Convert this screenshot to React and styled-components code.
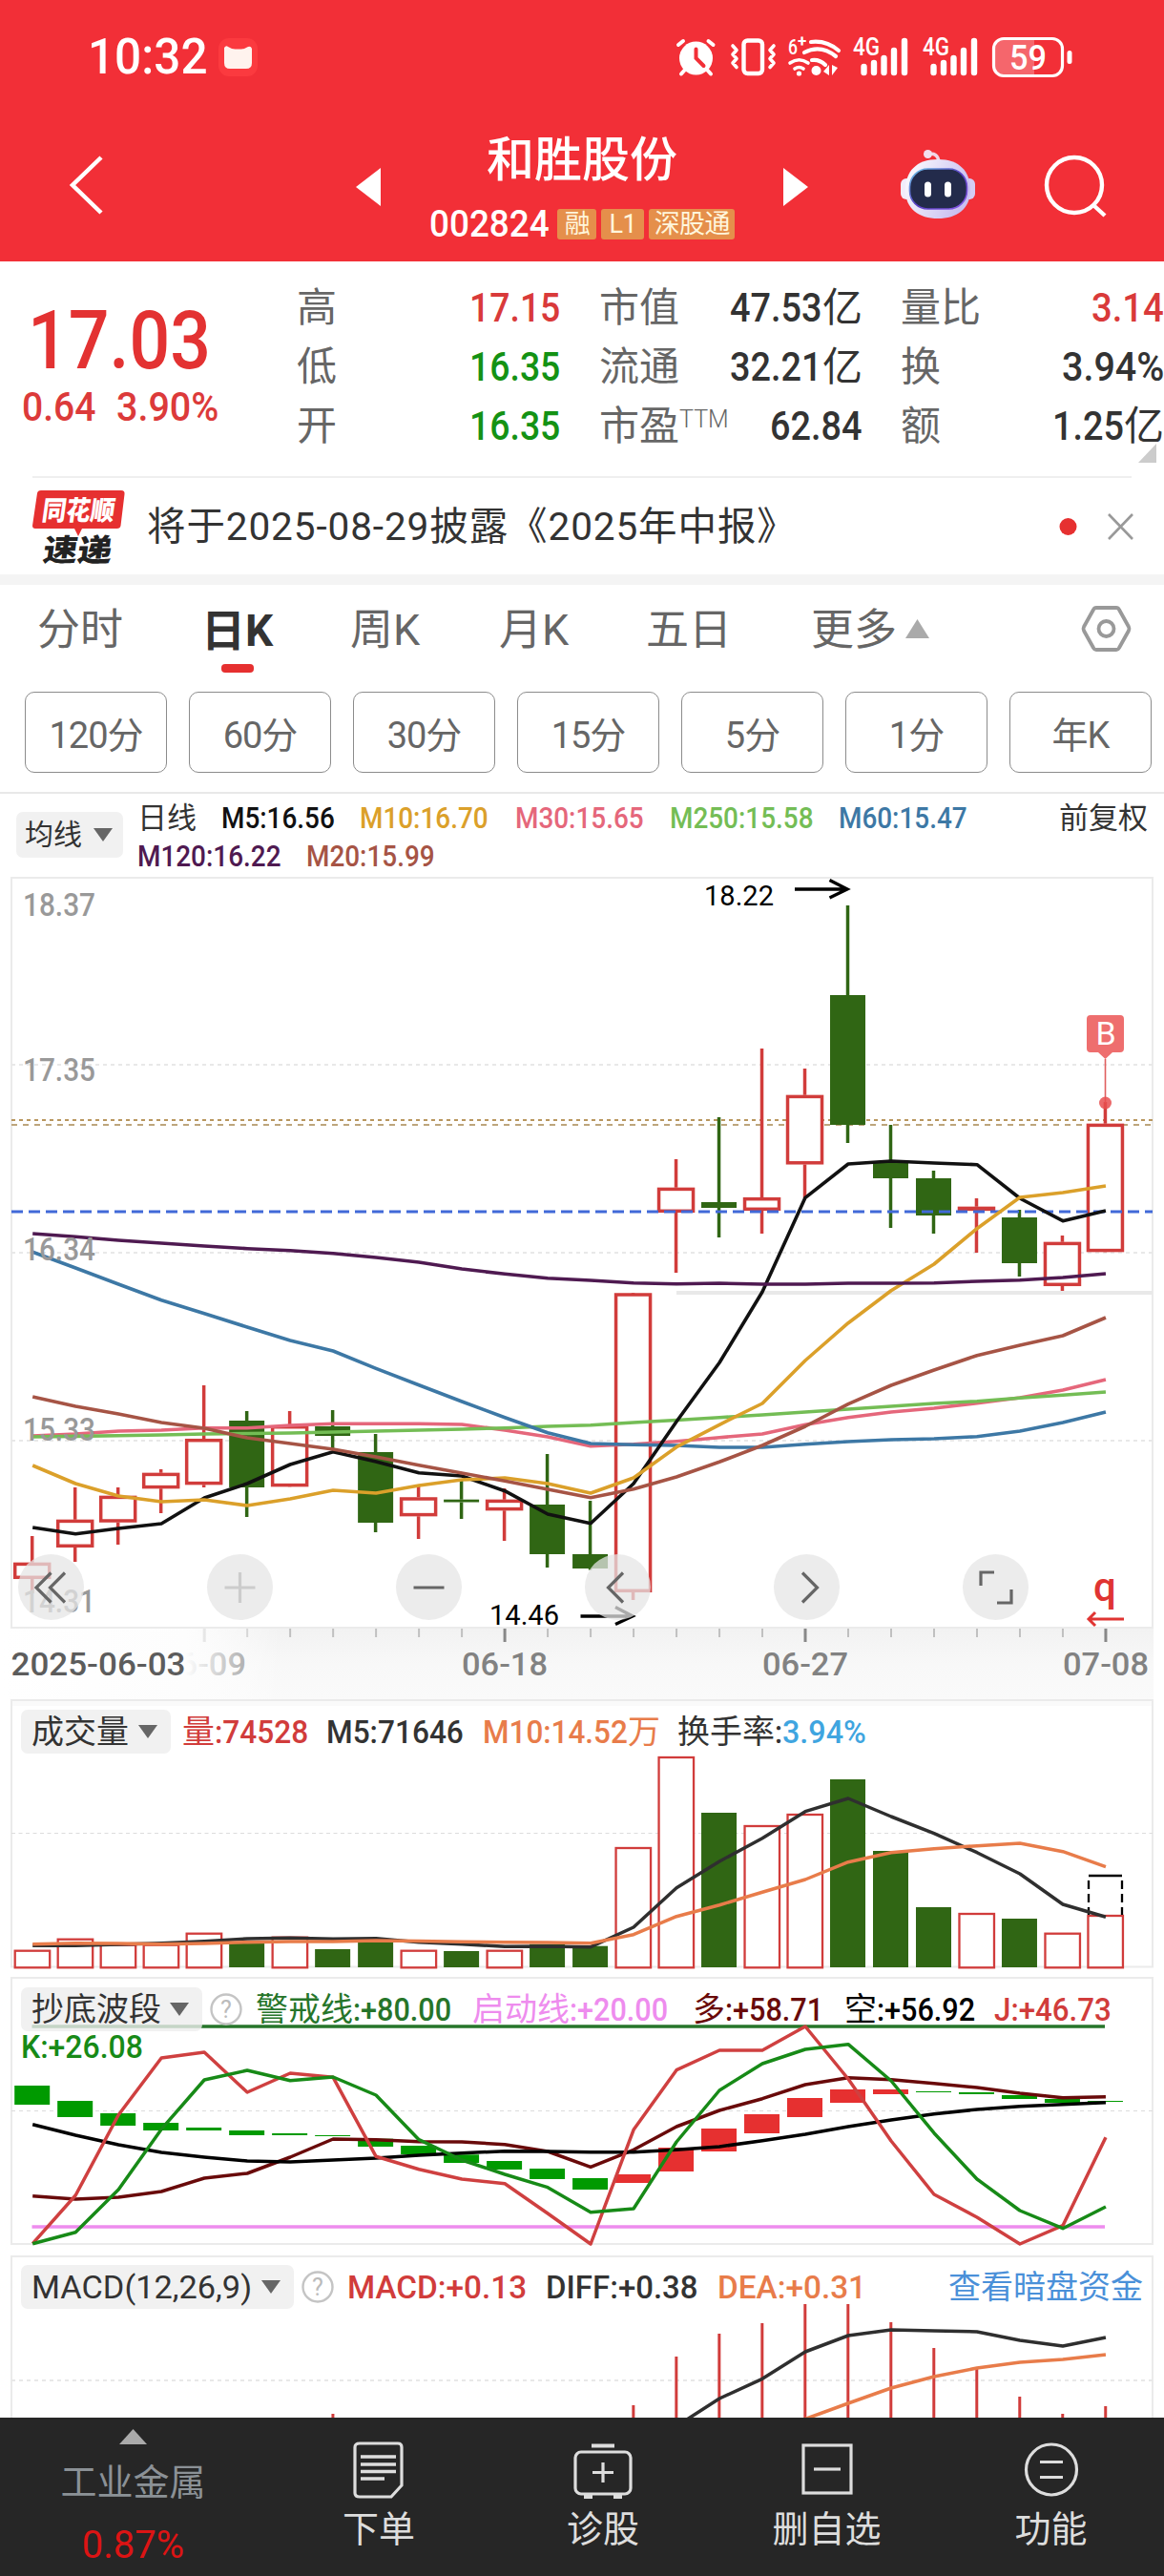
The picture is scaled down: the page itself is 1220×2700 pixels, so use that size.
import React from 'react'
import styled, { createGlobalStyle } from 'styled-components'

const GlobalStyle = createGlobalStyle`
  * { box-sizing: border-box; }
  body {
    margin: 0;
    background: #fff;
    font-family: Roboto, "Noto Sans CJK SC", sans-serif;
    color: #333;
  }
  svg { display: block; flex-shrink: 0; overflow: visible; }
  svg text { font-family: Roboto, "Noto Sans CJK SC", sans-serif; }
`;

const RED = '#d13c3b';
const GREEN = '#306614';

/* ---------- condensed figures ---------- */

// advance widths in em, anything else is as wide as a digit
const ADVANCE = {
  '.': 0.263, ':': 0.242, ',': 0.196, '+': 0.567, '%': 0.732, '(': 0.342, ')': 0.348,
  M: 0.873, K: 0.627, J: 0.552, A: 0.652, C: 0.651, D: 0.656, I: 0.272, F: 0.553, E: 0.568,
};
const emWidth = s => [...s].reduce((sum, c) => sum + (ADVANCE[c] || 0.562), 0);

const Squeezed = styled.span`
  display: inline-block;
  font-weight: ${p => p.$weight};
  letter-spacing: 0;
  color: inherit;
  transform: scaleX(${p => p.$k});
  transform-origin: left;
  margin-right: ${p => (p.$k - 1) * p.$em}em;
`;

const Num = ({ k = 0.9, weight = 500, children }) => (
  <Squeezed $k={k} $weight={weight} $em={emWidth(children)}>{children}</Squeezed>
)

const Page = styled.div`
  width: 1220px;
  height: 2700px;
  overflow: hidden;
  display: flex;
  flex-direction: column;
  white-space: nowrap;
`;

/* ---------- header ---------- */

const Header = styled.header`
  height: 274px;
  background: #f22f37;
  color: #fff;
`;

const StatusBar = styled.div`
  height: 120px;
  padding: 0 96px 0 92px;
  display: flex;
  align-items: center;
  justify-content: space-between;
`;

const Clock = styled.div`
  display: flex;
  align-items: center;
  gap: 11px;
  font-size: 51px;
  line-height: 60px;
`;

const TitleBar = styled.div`
  height: 154px;
  display: grid;
  grid-template-columns: 373px 474px 373px;
`;

const HeaderLeft = styled.div`
  padding: 42px 0 0 72px;
`;

const HeaderRight = styled.div`
  display: flex;
  gap: 71px;
  padding: 35px 0 0 96px;
`;

const StockSwitch = styled.div`
  display: flex;
  justify-content: space-between;
  > svg { margin-top: 56px; }
`;

const StockName = styled.div`
  display: flex;
  flex-direction: column;
  align-items: center;
  h1 {
    margin: 18px 0 0;
    font-size: 50px;
    line-height: 60px;
    font-weight: 500;
  }
`;

const CodeRow = styled.div`
  display: flex;
  align-items: center;
  gap: 5px;
  margin-top: 20px;
  height: 34px;
  font-size: 38px;
  line-height: 34px;
  > span:first-child { padding-right: 4px; }
`;

const Tag = styled.div`
  height: 32px;
  width: ${p => p.$w}px;
  display: flex;
  justify-content: center;
  background: #e58f4b;
  color: #fff6dc;
  border-radius: 3px;
  font-size: 27px;
  line-height: 32px;
  letter-spacing: -0.5px;
`;

/* ---------- quote ---------- */

const Quote = styled.section`
  position: relative;
  height: 225px;
  display: flex;
`;

const PriceBlock = styled.div`
  width: 311px;
  padding: 43px 0 0 23px;
  color: #e33232;
  strong {
    display: block;
    padding-left: 6px;
    font-size: 85px;
    font-weight: 500;
    line-height: 80px;
  }
  div {
    display: flex;
    gap: 21px;
    margin-top: 8px;
    font-size: 42px;
    line-height: 44px;
    color: #dc3a3a;
  }
`;

const StatGrid = styled.div`
  height: 186px;
  margin-top: 18px;
  display: grid;
  grid-template-columns: 277px 276px 276px;
  column-gap: 40px;
  grid-template-rows: repeat(3, 62px);
`;

const Stat = styled.div`
  display: flex;
  justify-content: space-between;
  align-items: center;
  font-size: 42px;
  line-height: 62px;
  label { color: #666; }
  sup {
    font-size: 25px;
    line-height: 20px;
    vertical-align: 13px;
    font-weight: 300;
  }
  b {
    font-weight: 400;
    color: ${p => p.$color || '#333'};
  }
`;

const Corner = styled.svg`
  position: absolute;
  right: 8px;
  bottom: 14px;
`;

const News = styled.section`
  height: 103px;
  margin: 0 34px;
  border-top: 2px solid #efefef;
  display: flex;
  align-items: center;
  p {
    flex: 1;
    margin: 0 0 0 23px;
    font-size: 40.5px;
    line-height: 60px;
    letter-spacing: 0.9px;
  }
  > svg:last-child { margin-right: -2px; }
`;

const Divider = styled.div`
  height: 11px;
  background: #f4f4f4;
`;

/* ---------- period tabs ---------- */

const Tabs = styled.nav`
  height: 112px;
  padding: 16px 34px 0 39px;
  display: flex;
`;

const Tab = styled.div`
  width: ${p => p.$w}px;
  display: flex;
  gap: 9px;
  font-size: 45px;
  line-height: 64px;
  color: ${p => p.$active ? '#333' : '#666'};
  font-weight: ${p => p.$active ? 700 : 400};
  div {
    display: flex;
    flex-direction: column;
    align-items: center;
    font-size: 46px;
  }
  i {
    width: 34px;
    height: 9px;
    margin-top: 3px;
    border-radius: 4px;
    background: #e63030;
  }
  svg { margin-top: 20px; }
`;

const Minutes = styled.div`
  height: 105px;
  padding: 0 13px 0 26px;
  display: flex;
  justify-content: space-between;
`;

const MinuteButton = styled.button`
  width: 149px;
  height: 85px;
  padding: 0;
  border: 1px solid #8c8c8c;
  border-radius: 10px;
  background: #fff;
  color: #666;
  font: inherit;
  font-size: 38px;
  letter-spacing: -1px;
`;

/* ---------- charts ---------- */

const MaHeader = styled.section`
  height: 91px;
  padding: 6px 17px 0;
  border-top: 2px solid #e8e8e8;
  display: flex;
  font-size: 31px;
  line-height: 40px;
`;

const Chip = styled.div`
  width: ${p => p.$w}px;
  height: 46px;
  margin-right: ${p => p.$gap || 12}px;
  padding: 0 14px 0 11px;
  flex-shrink: 0;
  display: flex;
  align-items: center;
  justify-content: space-between;
  border-radius: 7px;
  background: rgba(238, 238, 238, 0.8);
  color: #333;
  font-size: 34px;
`;

const MaChip = styled(Chip)`
  height: 48px;
  margin-top: 13px;
  padding: 0 11px 0 9px;
  font-size: 30px;
`;

const MaRows = styled.div`
  flex: 1;
`;

const Row = styled.div`
  display: flex;
`;

const Legend = styled.span`
  width: ${p => p.$w}px;
  flex-shrink: 0;
  color: ${p => p.$color || '#333'};
  em { font-style: normal; color: #3fa5e0; }
`;

const Panel = styled.section`
  position: relative;
  height: ${p => p.$h}px;
  flex-shrink: 0;
  overflow: ${p => p.$clip ? 'hidden' : 'visible'};
`;

const PanelHeader = styled.div`
  position: absolute;
  top: 10px;
  left: 22px;
  right: 12px;
  font-size: 34px;
  line-height: 46px;
`;

const KRow = styled.div`
  line-height: 32px;
`;

const Controls = styled.div`
  position: absolute;
  left: 19px;
  bottom: 9px;
  display: flex;
  gap: 129px;
`;

const RoundButton = styled.div`
  width: 69px;
  height: 69px;
  border-radius: 50%;
  background: rgba(230, 230, 230, 0.74);
`;

/* ---------- bottom nav ---------- */

const BottomNav = styled.nav`
  height: 166px;
  flex-shrink: 0;
  background: #262626;
  display: grid;
  grid-template-columns: 279px 236px 234px 235px 235px;
`;

const NavItem = styled.div`
  display: flex;
  flex-direction: column;
  align-items: center;
  padding-top: 22px;
  color: #ddd;
  font-size: 38px;
  line-height: 48px;
  svg { margin-bottom: 7px; }
`;

const Sector = styled(NavItem)`
  padding-top: 12px;
  color: #8b9196;
  svg { margin-bottom: 16px; }
  b {
    margin-top: 18px;
    font-size: 40px;
    font-weight: 400;
    color: #dc1414;
  }
`;

/* ---------- data, in chart units ---------- */

const STEP = 44.99;
const cx = i => 33.7 + STEP * i;

// [up, bodyTop, bodyBottom, high, low]
const candles = [
  [1, 1637.7, 1655, 1610, 1670], [1, 1592.7, 1622, 1559, 1637], [1, 1567.7, 1595.7, 1559, 1619],
  [1, 1543.7, 1560.3, 1540, 1586], [1, 1508, 1556.3, 1452, 1559], [0, 1489, 1559, 1479, 1590],
  [1, 1494, 1558.3, 1479, 1558], [0, 1495, 1505, 1478, 1520], [0, 1522, 1596, 1503, 1606],
  [1, 1569.3, 1589.3, 1558, 1613], [0, 1571.7, 1574.5, 1550, 1592], [1, 1571.7, 1583.3, 1560, 1615],
  [0, 1577, 1629, 1524, 1643], [0, 1629, 1644, 1573, 1645.5], [1, 1355.3, 1669, 1356, 1677],
  [1, 1244.7, 1271, 1215, 1334], [0, 1260, 1266, 1171, 1297], [1, 1255, 1269, 1099, 1293],
  [1, 1147.7, 1220.5, 1120, 1256], [0, 1043, 1179, 949, 1198], [0, 1218.7, 1235, 1179, 1287],
  [0, 1235, 1274, 1227, 1293], [1, 1264.7, 1269, 1256, 1313], [0, 1276, 1324, 1268, 1338],
  [1, 1301.7, 1348, 1295, 1353], [1, 1177.7, 1312.3, 1155, 1312],
];

const averages = [
  ['#e5677b', [1505, 1503, 1500, 1499, 1496.7, 1496.7, 1494, 1492.3, 1492.3, 1492.3, 1493, 1499, 1506, 1515.7, 1513.7, 1510.7, 1506.7, 1503, 1493.3, 1485.7, 1480, 1476, 1470.7, 1465, 1457, 1446]],
  ['#74bd55', [1506, 1505.4, 1504.7, 1504, 1503, 1502.5, 1502, 1501, 1500, 1499, 1498, 1496.7, 1495, 1493.7, 1491, 1488.5, 1485.7, 1483, 1480, 1477, 1474, 1471, 1468.7, 1465.3, 1462.3, 1459]],
  ['#3d78a5', [1312.3, 1329, 1346, 1362.7, 1376.7, 1391, 1405, 1416, 1434.3, 1451.7, 1469, 1485.7, 1501.7, 1513, 1514.3, 1515, 1517, 1517, 1513.7, 1511, 1509, 1508, 1505.7, 1500, 1491, 1480]],
  ['#111', [1601, 1607.7, 1602, 1597, 1570, 1555, 1535, 1521.7, 1532, 1543.7, 1547, 1562.7, 1587, 1596.7, 1555, 1490, 1428.3, 1354, 1255.3, 1220, 1217, 1219, 1220.7, 1256, 1279.7, 1269]],
  ['#dba02a', [1536, 1555, 1568, 1574, 1572, 1578, 1571, 1562, 1565, 1557, 1551, 1549, 1555, 1565, 1549, 1516.7, 1493.3, 1471, 1426, 1386.7, 1352.7, 1325, 1287.7, 1255, 1250, 1243]],
  ['#4f1a51', [1293, 1296.3, 1300, 1303, 1306, 1308.7, 1310.7, 1313.7, 1318, 1323, 1330, 1335.3, 1339.7, 1342, 1344.7, 1345.7, 1345, 1346, 1346, 1345, 1345, 1344.7, 1343, 1341.7, 1339, 1335]],
  ['#a65445', [1464, 1474, 1482, 1491, 1497, 1507, 1513, 1519, 1527, 1535.7, 1544, 1552.3, 1561, 1569.7, 1560.7, 1548, 1532.3, 1515, 1495, 1471.7, 1452, 1436, 1420.7, 1410, 1400, 1381]],
];

const volumes = [2043.7, 2031.7, 2037.7, 2037.7, 2025.7, 2035.7, 2029.7, 2043, 2035.7, 2043.7, 2045, 2043.7, 2037.7, 2039.7, 1936, 1841, 1900, 1913, 1901, 1865, 1940, 1999, 2005, 2011, 2025.7, 2007];
const volumeLines = [
  ['#2f2f2f', [2039.3, 2039.3, 2038, 2036.7, 2034.7, 2032, 2031.3, 2032.3, 2031.7, 2035.7, 2037.7, 2040.3, 2040, 2040.7, 2020, 1978.7, 1951, 1926.7, 1898.7, 1885, 1904, 1921.7, 1941.7, 1964, 1996, 2009.3]],
  ['#e87c4a', [2037.7, 2036.7, 2037, 2037.7, 2037, 2035.7, 2035, 2035, 2034, 2034.5, 2035.3, 2035.7, 2036, 2036.7, 2027.7, 2008.7, 1996.7, 1983.3, 1970, 1951.7, 1941.7, 1937.7, 1934.7, 1932, 1940.7, 1956.7]],
];

const waveBlocks = [
  [2186, 2206], [2202, 2219], [2215, 2228], [2225, 2233], [2230, 2233], [2233, 2238], [2236, 2238], [2238, 2239],
  [2241.7, 2250], [2249, 2258], [2258.3, 2267], [2265, 2274], [2273, 2284], [2283, 2295],
  [2279, 2288], [2251, 2276], [2231, 2255], [2216, 2236], [2199, 2219], [2190, 2204], [2190, 2195],
  [2192, 2193], [2193, 2195], [2196, 2200], [2200, 2204], [2202, 2203],
];
const waveLines = [
  ['#690a0a', [2301.7, 2305, 2303, 2297, 2283, 2278, 2261, 2242, 2242.7, 2244.7, 2245, 2247.7, 2255, 2271.3, 2253.3, 2229, 2212, 2199.7, 2185, 2177.7, 2179.7, 2183.7, 2188, 2194, 2198.7, 2197.7]],
  ['#000', [2226.7, 2238, 2248, 2256, 2261, 2265, 2266, 2264, 2262, 2259, 2256.7, 2254.7, 2255, 2255.7, 2255.7, 2253.3, 2250, 2243.7, 2237, 2229, 2222, 2215.7, 2211, 2207.7, 2205.7, 2203.7]],
  ['#cf4040', [2351.7, 2301, 2216.7, 2157, 2151, 2193, 2173, 2177.3, 2260.3, 2273.7, 2284, 2288.7, 2320, 2352, 2232.3, 2169.7, 2149, 2149, 2124, 2179, 2244, 2300, 2324, 2352, 2332.7, 2240.3]],
  ['#178a17', [2351.7, 2339.7, 2295, 2231.7, 2180, 2170, 2180.7, 2177, 2196, 2242.7, 2264, 2279, 2292.7, 2318.7, 2315, 2245, 2191, 2163, 2148, 2142.7, 2181, 2235.7, 2284, 2317, 2335.7, 2313]],
];

const macdBars = { 7: 2530, 14: 2521, 15: 2470, 16: 2446, 17: 2435, 18: 2415, 19: 2415, 20: 2434, 21: 2461, 22: 2483, 23: 2512, 24: 2530, 25: 2522 };
const macdLines = [
  ['#2f2f2f', 15, [2543, 2514, 2493.3, 2465, 2448, 2442, 2443, 2444, 2453, 2459, 2450]],
  ['#e87c4a', 18, [2535.5, 2519, 2503, 2491, 2482, 2476, 2473, 2468]],
];

const Line = ({ color, values, from = 0, w = 3.5 }) => (
  <polyline
    fill="none"
    stroke={color}
    strokeWidth={w}
    strokeLinejoin="round"
    points={values.map((y, i) => `${cx(i + from) + 0.5},${y}`).join(' ')}
  />
)

const Frame = ({ top, bottom }) => (
  <rect x="12" y={top} width="1196" height={bottom - top} fill="none" stroke="#ebebeb" strokeWidth="2" />
)

const Grid = ({ y, dash = '4 4', color = '#e8e8e8', w = 2 }) => (
  <path d={`M12 ${y}H1208`} stroke={color} strokeWidth={w} strokeDasharray={dash} />
)

const Caret = ({ up, w = 20, h = 14, color = '#666' }) => (
  <svg width={w} height={h} viewBox="0 0 20 14" preserveAspectRatio="none">
    <path d={up ? 'M10 0L20 14H0Z' : 'M0 0H20L10 14Z'} fill={color} />
  </svg>
)

const HelpIcon = styled.svg`
  margin-right: 14px;
`;

const Help = () => (
  <HelpIcon width="34" height="46" viewBox="0 0 34 46">
    <circle cx="17" cy="23" r="15.500" fill="none" stroke="#c4c4c4" strokeWidth="2.400" />
    <text x="17" y="32" fontSize="25" textAnchor="middle" fill="#bbb">?</text>
  </HelpIcon>
)

const Signal = ({ x }) => (
  <g transform={`translate(${x} 37)`}>
    <text x="0" y="20" fontSize="25" fontWeight="500" fill="#fff" textLength="28" lengthAdjust="spacingAndGlyphs">4G</text>
    <path d="M11.500 32v6M22 28v10M32.500 23v15M43 15v23M54 5v33" stroke="#fff" strokeWidth="6.400" strokeLinecap="round" />
  </g>
)

function StatusIcons() {
  return (
    <svg width="416" height="44" viewBox="708 37 416 44">
      <g fill="none" stroke="#fff" strokeLinecap="round">
        <circle cx="729.500" cy="60" r="17.500" fill="#fff" stroke="none" />
        <path d="M711 46l5-4M747.500 46l-5-4M718 72l-4 4.500M741 72l4 4.500" strokeWidth="4" />
        <path d="M729.500 50.500V60l8 8" stroke="#f22f37" strokeWidth="4" />
        <rect x="779.500" y="41.500" width="19.500" height="34.500" rx="4" strokeWidth="4.400" />
        <path d="M768 47l4 4.500-4 4.500 4 4.500-4 4.500 4 4.500M811 47l-4 4.500 4 4.500-4 4.500 4 4.500-4 4.500" strokeWidth="3.600" strokeLinejoin="round" />
        <path d="M828 65q9.500-6.500 19 0M833 71q4.500-3 9 0" strokeWidth="3.600" />
        <path d="M850 43q16-2 29 9M843 54q17-9 33 4M851 62q8-1 14 5" strokeWidth="4.200" />
      </g>
      <text x="826" y="56" fontSize="22" fontWeight="500" fill="#fff" textLength="10" lengthAdjust="spacingAndGlyphs">6</text>
      <text x="836" y="48" fontSize="17" fontWeight="700" fill="#fff">+</text>
      <circle cx="837.500" cy="76" r="2.600" fill="#fff" />
      <circle cx="855.500" cy="73" r="5" fill="#fff" />
      <path d="M863 74l6-7v11M872 67l6 3-6 8z" fill="#fff" />
      <Signal x={894} />
      <Signal x={967} />
      <path d="M1052 41h32v36h-32a9 9 0 0 1-9-9V50a9 9 0 0 1 9-9z" fill="#f5666c" />
      <rect x="1041.500" y="39.500" width="72" height="39" rx="10.500" fill="none" stroke="#fff" strokeWidth="3.200" />
      <text x="1077.500" y="72" fontSize="36" fontWeight="500" fill="#fff" textAnchor="middle" textLength="39" lengthAdjust="spacingAndGlyphs">59</text>
      <rect x="1118.500" y="52" width="5" height="14" rx="2.500" fill="#fff" />
    </svg>
  )
}

function Robot() {
  return (
    <svg width="80" height="76" viewBox="943 155 80 76">
      <defs>
        <linearGradient id="shell" x1="0" y1="0" x2="1" y2="0.4">
          <stop offset="0" stopColor="#fff" />
          <stop offset="1" stopColor="#c9bff0" />
        </linearGradient>
        <linearGradient id="visor" x1="0" y1="0" x2="1" y2="1">
          <stop offset="0" stopColor="#6cc8e8" />
          <stop offset="0.5" stopColor="#5a3fc4" />
          <stop offset="1" stopColor="#8a5ae8" />
        </linearGradient>
      </defs>
      <path d="M972 162q11-3 12 8" fill="none" stroke="#f1d5e6" strokeWidth="3.500" />
      <circle cx="972.500" cy="161.500" r="4.500" fill="#f3dfee" />
      <rect x="944" y="187" width="12" height="22" rx="6" fill="#f2ecfb" />
      <rect x="1010" y="187" width="12" height="22" rx="6" fill="#d5cdf4" />
      <path d="M983 167c23 0 34 13 34 32 0 20-14 30-34 30s-34-10-34-30c0-19 11-32 34-32z" fill="url(#shell)" />
      <rect x="953.500" y="177" width="60" height="42" rx="19" fill="#232b4b" stroke="url(#visor)" strokeWidth="1.600" />
      <rect x="969" y="190.500" width="7" height="16" rx="3.500" fill="#fff" />
      <rect x="990" y="190.500" width="7" height="16" rx="3.500" fill="#fff" />
    </svg>
  )
}

function NewsLogo() {
  return (
    <svg width="97" height="80" viewBox="35 509 97 80">
      <path d="M44 511h84q4 0 3.500 4l-4 33q-.500 3-4 3H87l-4 8-4-8H38q-3 0-3-3l5-34q.500-3 4-3z" fill="#e63030" />
      <text transform="translate(44 542) skewX(-8)" fontSize="28" fontWeight="900" fill="#fff" textLength="76" lengthAdjust="spacingAndGlyphs">同花顺</text>
      <text transform="translate(45 585) skewX(-8)" fontSize="32" fontWeight="900" fill="#222" textLength="72" lengthAdjust="spacingAndGlyphs">速递</text>
    </svg>
  )
}

function CandleChart() {
  return (
    <svg width="1220" height="786" viewBox="0 921 1220 786">
      <Frame top={920} bottom={1706} />
      <Grid y={1116} />
      <Grid y={1313} />
      <Grid y={1510} />
      <path d="M709 1355H1208" stroke="#e9e9e9" strokeWidth="4" />
      <Grid y={1174} color="#b9975f" />
      <Grid y={1179} dash="6 6" color="#bda57c" />
      {candles.map(([up, top, bottom, high, low], i) => (
        <g key={i} stroke={up ? RED : GREEN} strokeWidth="3.500">
          <path d={`M${cx(i)} ${high}V${top}M${cx(i)} ${bottom}V${low}`} />
          {up
            ? <rect x={cx(i) - 18} y={top + 1.7} width="36" height={Math.max(bottom - top - 3.4, 1)} fill="#fff" />
            : <rect x={cx(i) - 18.5} y={top} width="37" height={bottom - top} fill={GREEN} stroke="none" />}
        </g>
      ))}
      <path d="M12 1270H1208" stroke="#4169d8" strokeWidth="3.200" strokeDasharray="12 6" />
      {averages.map(([color, values]) => <Line key={color} color={color} values={values} w={3.6} />)}
      <g fill="#999" fontSize="33.500" fontWeight="500">
        {[['18.37', 960], ['17.35', 1132.5], ['16.34', 1321], ['15.33', 1510], ['14.31', 1690]].map(([label, y]) => (
          <text key={label} x="24" y={y} textLength="76" lengthAdjust="spacingAndGlyphs">{label}</text>
        ))}
      </g>
      <g fontSize="30" fill="#000">
        <text x="738" y="949" textLength="73" lengthAdjust="spacingAndGlyphs">18.22</text>
        <text x="513" y="1702.500" textLength="73" lengthAdjust="spacingAndGlyphs">14.46</text>
      </g>
      <g fill="none" stroke="#000" strokeWidth="3.400">
        <path d="M833 932H888M869.500 922.500L888 932L869.500 941" />
        <path d="M608.500 1694H663M645 1684.500L663 1694L645 1702.500" />
      </g>
      <path d="M1143 1064h31q4 0 4 4v31q0 4-4 4h-8l-7.500 7-7.500-7h-8q-4 0-4-4v-31q0-4 4-4z" fill="#ee6e6e" />
      <text x="1159" y="1095" fontSize="34" textAnchor="middle" fill="#fff">B</text>
      <path d="M1158.500 1110V1156" stroke="#e06060" strokeWidth="1.600" />
      <circle cx="1158.500" cy="1156" r="6.500" fill="#e74f50" fillOpacity=".85" />
      <text x="1158" y="1678" fontSize="42" fontWeight="500" textAnchor="middle" fill="#e03432">q</text>
      <path d="M1178 1697H1141M1148 1690L1141 1697L1148 1704" fill="none" stroke="#e03432" strokeWidth="3" />
    </svg>
  )
}

const controlIcons = [
  'M34.500 19.500L19 35l15.500 15.500M49 19.500L33.500 35L49 50.500',
  'M18.500 35h32M34.500 19v32',
  'M18.500 35h32',
  'M40 19.500L24.500 35l15.500 15.500',
  'M30 19.500L45.500 35L30 50.500',
  'M19 33V19h14M36 51h15V37',
];

function DateAxis() {
  return (
    <svg width="1220" height="75" viewBox="0 1707 1220 75">
      <defs>
        <linearGradient id="shade" x1="0" y1="0" x2="0" y2="1">
          <stop offset="0" stopColor="#f2f2f2" />
          <stop offset="0.5" stopColor="#f8f8f8" />
          <stop offset="1" stopColor="#fafafa" />
        </linearGradient>
        <linearGradient id="fade" x1="0" y1="0" x2="1" y2="0">
          <stop offset="0" stopColor="#fff" />
          <stop offset="0.66" stopColor="#fdfdfd" />
          <stop offset="1" stopColor="#fff" stopOpacity="0" />
        </linearGradient>
      </defs>
      <rect x="12" y="1707" width="1197" height="75" fill="url(#shade)" />
      {candles.slice(4).map((_, i) => {
        const major = i % 7 === 0
        return <path key={i} d={`M${cx(i + 4) + 0.5} 1707v${major ? 14 : 9}`} stroke={major ? '#888' : '#c0c0c0'} strokeWidth={major ? 3 : 2} />
      })}
      <g fontSize="34" fontWeight="500" fill="#828282">
        {[['06-09', 168], ['06-18', 484], ['06-27', 799], ['07-08', 1114]].map(([d, x]) => (
          <text key={d} x={x} y="1755.500" textLength="90" lengthAdjust="spacingAndGlyphs">{d}</text>
        ))}
      </g>
      <rect x="0" y="1707" width="295" height="75" fill="url(#fade)" />
      <text x="11.500" y="1755.500" fontSize="34" fontWeight="500" fill="#5c5c5c" textLength="183" lengthAdjust="spacingAndGlyphs">2025-06-03</text>
    </svg>
  )
}

function VolumeChart() {
  return (
    <svg width="1220" height="291" viewBox="0 1782 1220 291">
      <rect x="12" y="1782" width="1196" height="6" fill="#fafafa" />
      <Frame top={1782} bottom={2061.5} />
      <Grid y={1921.5} dash="4 3.5" color="#dcdcdc" w={1} />
      {volumes.map((top, i) => candles[i][0]
        ? <rect key={i} x={cx(i) - 18} y={top + 1} width="36.500" height={2061.3 - top} fill="#fff" stroke={RED} strokeWidth="2.300" />
        : <rect key={i} x={cx(i) - 18.5} y={top} width="37" height={2062 - top} fill={GREEN} />)}
      <path d="M1141 1966H1176" stroke="#000" strokeWidth="2.600" />
      <path d="M1141 1971V2007M1176 1971V2007" stroke="#000" strokeWidth="2.300" strokeDasharray="9 5" />
      {volumeLines.map(([color, values]) => <Line key={color} color={color} values={values} />)}
    </svg>
  )
}

function WaveChart() {
  return (
    <svg width="1220" height="291" viewBox="0 2073 1220 291">
      <Frame top={2073} bottom={2352} />
      <Grid y={2212.5} dash="4 4" color="#dcdcdc" w={1} />
      <path d="M33.500 2124H1158" stroke="#26752a" strokeWidth="3.600" />
      <path d="M33.500 2334H1158" stroke="#ee8cee" strokeWidth="3.600" />
      {waveBlocks.map(([top, bottom], i) => (
        <rect key={i} x={cx(i) - 18.5} y={top} width="37" height={bottom - top} fill={i > 13 && i < 21 ? '#e63030' : '#009a00'} />
      ))}
      {waveLines.map(([color, values]) => <Line key={color} color={color} values={values} />)}
    </svg>
  )
}

function MacdChart() {
  return (
    <svg width="1220" height="170" viewBox="0 2364 1220 170">
      <Frame top={2365} bottom={2644} />
      <Grid y={2495} />
      {Object.entries(macdBars).map(([i, top]) => (
        <path key={i} d={`M${cx(Number(i)) + 0.3} ${top}V2540`} stroke={RED} strokeWidth="3" />
      ))}
      {macdLines.map(([color, from, values]) => <Line key={color} color={color} from={from} values={values} />)}
    </svg>
  )
}

export default function App() {
  return (
    <Page>
      <GlobalStyle />

      <Header>
        <StatusBar>
          <Clock>
            <Num k={0.97}>10:32</Num>
            <svg width="41" height="40" viewBox="0 0 41 40">
              <rect width="41" height="40" rx="11" fill="#fb3a3f" />
              <path d="M6 10q2-3 4-1l4 2q7 1 13 0l4-2q3-1 4 2v15q0 6-6 6H12q-6 0-6-6z" fill="#fff3ee" />
            </svg>
          </Clock>
          <StatusIcons />
        </StatusBar>
        <TitleBar>
          <HeaderLeft>
            <svg width="38" height="64" viewBox="0 0 38 64">
              <path d="M34 3L4 32L34 61" fill="none" stroke="#fff" strokeWidth="4.500" />
            </svg>
          </HeaderLeft>
          <StockSwitch>
            <svg width="26" height="40" viewBox="0 0 26 40"><path d="M26 0V40L0 20Z" fill="#fff" /></svg>
            <StockName>
              <h1>和胜股份</h1>
              <CodeRow>
                <span><Num k={0.97}>002824</Num></span>
                <Tag $w={41}>融</Tag>
                <Tag $w={45}>L1</Tag>
                <Tag $w={90}>深股通</Tag>
              </CodeRow>
            </StockName>
            <svg width="26" height="40" viewBox="0 0 26 40"><path d="M0 0V40L26 20Z" fill="#fff" /></svg>
          </StockSwitch>
          <HeaderRight>
            <Robot />
            <svg width="68" height="74" viewBox="0 -6 68 74">
              <circle cx="32" cy="33" r="29" fill="none" stroke="#fff" strokeWidth="4.400" />
              <path d="M52 54l12 11" stroke="#fff" strokeWidth="4.400" />
            </svg>
          </HeaderRight>
        </TitleBar>
      </Header>

      <Quote>
        <PriceBlock>
          <strong><Num k={0.885}>17.03</Num></strong>
          <div><Num k={0.93}>0.64</Num><Num k={0.94}>3.90%</Num></div>
        </PriceBlock>
        <StatGrid>
          <Stat $color="#d93a3a"><label>高</label><b><Num k={0.89}>17.15</Num></b></Stat>
          <Stat><label>市值</label><b><Num>47.53</Num>亿</b></Stat>
          <Stat $color="#d93a3a"><label>量比</label><b><Num k={0.91}>3.14</Num></b></Stat>
          <Stat $color="#149214"><label>低</label><b><Num k={0.89}>16.35</Num></b></Stat>
          <Stat><label>流通</label><b><Num>32.21</Num>亿</b></Stat>
          <Stat><label>换</label><b><Num k={0.94}>3.94%</Num></b></Stat>
          <Stat $color="#149214"><label>开</label><b><Num k={0.89}>16.35</Num></b></Stat>
          <Stat><label>市盈<sup>TTM</sup></label><b><Num>62.84</Num></b></Stat>
          <Stat><label>额</label><b><Num>1.25</Num>亿</b></Stat>
        </StatGrid>
        <Corner width="19" height="20" viewBox="0 0 19 20"><path d="M19 0V20H0Z" fill="#ccc" /></Corner>
      </Quote>

      <News>
        <NewsLogo />
        <p>将于2025-08-29披露《2025年中报》</p>
        <svg width="78" height="30" viewBox="0 0 78 30">
          <circle cx="9.500" cy="15" r="9" fill="#e63030" />
          <path d="M52 2L77 28M77 2L52 28" stroke="#999" strokeWidth="2.600" />
        </svg>
      </News>

      <Divider />

      <Tabs>
        <Tab $w={172}>分时</Tab>
        <Tab $w={156} $active><div>日K<i /></div></Tab>
        <Tab $w={156}>周K</Tab>
        <Tab $w={154}>月K</Tab>
        <Tab $w={173}>五日</Tab>
        <Tab $w={283}>更多<Caret up w={25} h={20} color="#aaa" /></Tab>
        <svg width="53" height="62" viewBox="0 -5 53 62">
          <path d="M16 3H37Q39 3 40 5L50 23Q51 25 50 27L40 45Q39 47 37 47H16Q14 47 13 45L3 27Q2 25 3 23L13 5Q14 3 16 3Z" fill="none" stroke="#999" strokeWidth="3.800" />
          <circle cx="26.500" cy="25" r="8" fill="none" stroke="#999" strokeWidth="3.800" />
        </svg>
      </Tabs>

      <Minutes>
        {['120分', '60分', '30分', '15分', '5分', '1分', '年K'].map(m => <MinuteButton key={m}>{m}</MinuteButton>)}
      </Minutes>

      <MaHeader>
        <MaChip $w={112} $gap={15}>均线<Caret /></MaChip>
        <MaRows>
          <Row>
            <Legend $w={88}>日线</Legend>
            <Legend $w={145} $color="#111"><Num>M5:16.56</Num></Legend>
            <Legend $w={163} $color="#dba02a"><Num>M10:16.70</Num></Legend>
            <Legend $w={162} $color="#e5677b"><Num>M30:15.65</Num></Legend>
            <Legend $w={177} $color="#74bd55"><Num>M250:15.58</Num></Legend>
            <Legend $w={231} $color="#3d78a5"><Num>M60:15.47</Num></Legend>
            <Legend>前复权</Legend>
          </Row>
          <Row>
            <Legend $w={177} $color="#4f1a51"><Num>M120:16.22</Num></Legend>
            <Legend $w={163} $color="#a65445"><Num>M20:15.99</Num></Legend>
          </Row>
        </MaRows>
      </MaHeader>

      <Panel $h={786}>
        <CandleChart />
        <Controls>
          {controlIcons.map((d, i) => (
            <RoundButton key={d}>
              <svg width="69" height="69" viewBox="0 0 69 69">
                <path d={d} fill="none" stroke={i === 1 ? '#ccc' : '#666'} strokeWidth="3.200" />
              </svg>
            </RoundButton>
          ))}
        </Controls>
      </Panel>

      <Panel $h={75}>
        <DateAxis />
      </Panel>

      <Panel $h={291}>
        <VolumeChart />
        <PanelHeader>
          <Row>
            <Chip $w={157}>成交量<Caret /></Chip>
            <Legend $w={151} $color={RED}>量<Num k={0.93}>:74528</Num></Legend>
            <Legend $w={164}><Num k={0.93}>M5:71646</Num></Legend>
            <Legend $w={204} $color="#e87c4a"><Num k={0.925}>M10:14.52</Num>万</Legend>
            <Legend>换手率<Num>:</Num><em><Num k={0.95}>3.94%</Num></em></Legend>
          </Row>
        </PanelHeader>
      </Panel>

      <Panel $h={291}>
        <WaveChart />
        <PanelHeader>
          <Row>
            <Chip $w={190} $gap={8}>抄底波段<Caret /></Chip>
            <Help />
            <Legend $w={227} $color="#26752a">警戒线<Num>:+80.00</Num></Legend>
            <Legend $w={231} $color="#ee8cee">启动线<Num>:+20.00</Num></Legend>
            <Legend $w={159} $color="#690a0a">多<Num k={0.9}>:+58.71</Num></Legend>
            <Legend $w={157} $color="#000">空<Num k={0.9}>:+56.92</Num></Legend>
            <Legend $color={RED}><Num k={0.92}>J:+46.73</Num></Legend>
          </Row>
          <KRow>
            <Legend $color="#178a17"><Num k={0.94}>K:+26.08</Num></Legend>
          </KRow>
        </PanelHeader>
      </Panel>

      <Panel $h={170} $clip>
        <MacdChart />
        <PanelHeader>
          <Row>
            <Chip $w={286} $gap={8}><Num k={1.01} weight={400}>MACD(12,26,9)</Num><Caret /></Chip>
            <Help />
            <Legend $w={208} $color={RED}><Num k={0.98}>MACD:+0.13</Num></Legend>
            <Legend $w={180}><Num k={0.97}>DIFF:+0.38</Num></Legend>
            <Legend $w={242} $color="#e87c4a"><Num k={0.98}>DEA:+0.31</Num></Legend>
            <Legend $color="#4a90d9">查看暗盘资金</Legend>
          </Row>
        </PanelHeader>
      </Panel>

      <BottomNav>
        <Sector>
          <Caret up w={29} h={16} color="#aaa" />
          工业金属
          <b><Num k={1} weight={400}>0.87%</Num></b>
        </Sector>
        <NavItem>
          <svg width="56" height="64" viewBox="0 0 56 64" fill="none" stroke="#ddd" strokeWidth="3.200">
            <path d="M8 5H48Q52 5 52 9V49L41 61H8Q3 61 3 57V9Q3 5 8 5Z" />
            <path d="M9 19H46M9 27H46M9 34.500H46M9 42H34" strokeWidth="3.600" />
          </svg>
          下单
        </NavItem>
        <NavItem>
          <svg width="64" height="64" viewBox="0 0 64 64" fill="none" stroke="#ddd" strokeWidth="3.200">
            <path d="M20 7.500H44M12 61H21M43 61H52" strokeWidth="4" />
            <rect x="3" y="14" width="58" height="44" rx="6" />
            <path d="M21 35.500H43M32 25V46" />
          </svg>
          诊股
        </NavItem>
        <NavItem>
          <svg width="56" height="64" viewBox="0 0 56 64" fill="none" stroke="#ddd" strokeWidth="3.200">
            <rect x="3" y="7" width="50" height="50" />
            <path d="M14 32H42" />
          </svg>
          删自选
        </NavItem>
        <NavItem>
          <svg width="58" height="64" viewBox="0 0 58 64" fill="none" stroke="#ddd" strokeWidth="3.200">
            <circle cx="29" cy="32.500" r="26.500" />
            <path d="M17 24.500H41M17 40.500H41" />
          </svg>
          功能
        </NavItem>
      </BottomNav>
    </Page>
  )
}
